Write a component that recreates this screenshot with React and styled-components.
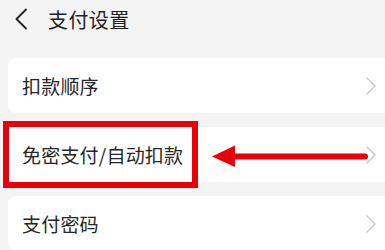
import React from 'react'
import styled, { createGlobalStyle } from 'styled-components'

const GlobalStyle = createGlobalStyle`
  html, body {
    margin: 0;
    padding: 0;
    background: #f4f4f4;
    overflow: hidden;
  }
  body {
    font-family: "Noto Sans CJK SC", "Noto Sans", sans-serif;
  }
`

const items = [
  { id: 'order', label: '扣款顺序' },
  { id: 'auto', label: '免密支付/自动扣款', marked: true },
  { id: 'password', label: '支付密码' },
]

const BackIcon = () => (
  <svg width="14" height="22" viewBox="0 0 14 22" fill="none">
    <path d="M12 1.5 L2.5 11 L12 20.5" stroke="#222" strokeWidth="1.8" strokeLinecap="round" strokeLinejoin="round" />
  </svg>
)

const Chevron = () => (
  <svg width="12" height="18" viewBox="0 0 12 18" fill="none">
    <path d="M2 1 L10 9 L2 17" stroke="#c6c6c6" strokeWidth="1.3" strokeLinecap="round" strokeLinejoin="round" />
  </svg>
)

const PointerArrow = () => (
  <svg width="160" height="24" viewBox="0 0 160 24">
    <path d="M24 9.5 L155 9.5 A3 3 0 0 1 155 15.5 L24 15.5 Z" fill="#e8000b" />
    <path d="M2 12.5 L25 1.5 L25 23 Z" fill="#e8000b" />
  </svg>
)

export default function App() {
  return (
    <Page>
      <GlobalStyle />
      <Header>
        <BackButton>
          <BackIcon />
        </BackButton>
        <Title>支付设置</Title>
      </Header>
      <List>
        {items.map((item) => (
          <Row key={item.id}>
            <Label>{item.label}</Label>
            <ChevronWrap>
              <Chevron />
            </ChevronWrap>
            {item.marked && (
              <>
                <Highlight />
                <ArrowWrap>
                  <PointerArrow />
                </ArrowWrap>
              </>
            )}
          </Row>
        ))}
      </List>
    </Page>
  )
}

const Page = styled.div`
  width: 385px;
  height: 250px;
  overflow: hidden;
  background: #f4f4f4;
`

const Header = styled.div`
  display: flex;
  align-items: center;
  height: 38px;
  padding-left: 14px;
`

const BackButton = styled.div`
  display: flex;
  align-items: center;
  width: 34px;
`

const Title = styled.h1`
  margin: 0;
  font-size: 20px;
  font-weight: 400;
  color: #1f1f1f;
  letter-spacing: 0.4px;
`

const List = styled.div`
  display: flex;
  flex-direction: column;
  gap: 14px;
  padding: 20px 0 0 8px;
`

const Row = styled.div`
  position: relative;
  display: flex;
  align-items: center;
  height: 55px;
  margin-right: -12px;
  padding: 0 20px 0 14px;
  background: #fff;
  border-radius: 8px;
`

const Label = styled.span`
  flex: 1;
  font-size: 19px;
  color: #262626;
  letter-spacing: 0.2px;
`

const ChevronWrap = styled.div`
  display: flex;
  align-items: center;
`

const Highlight = styled.div`
  position: absolute;
  left: -5px;
  top: -6px;
  width: 195px;
  height: 67px;
  box-sizing: border-box;
  border: 6px solid #e8000b;
`

const ArrowWrap = styled.div`
  position: absolute;
  left: 202px;
  top: 17px;
  display: flex;
`
